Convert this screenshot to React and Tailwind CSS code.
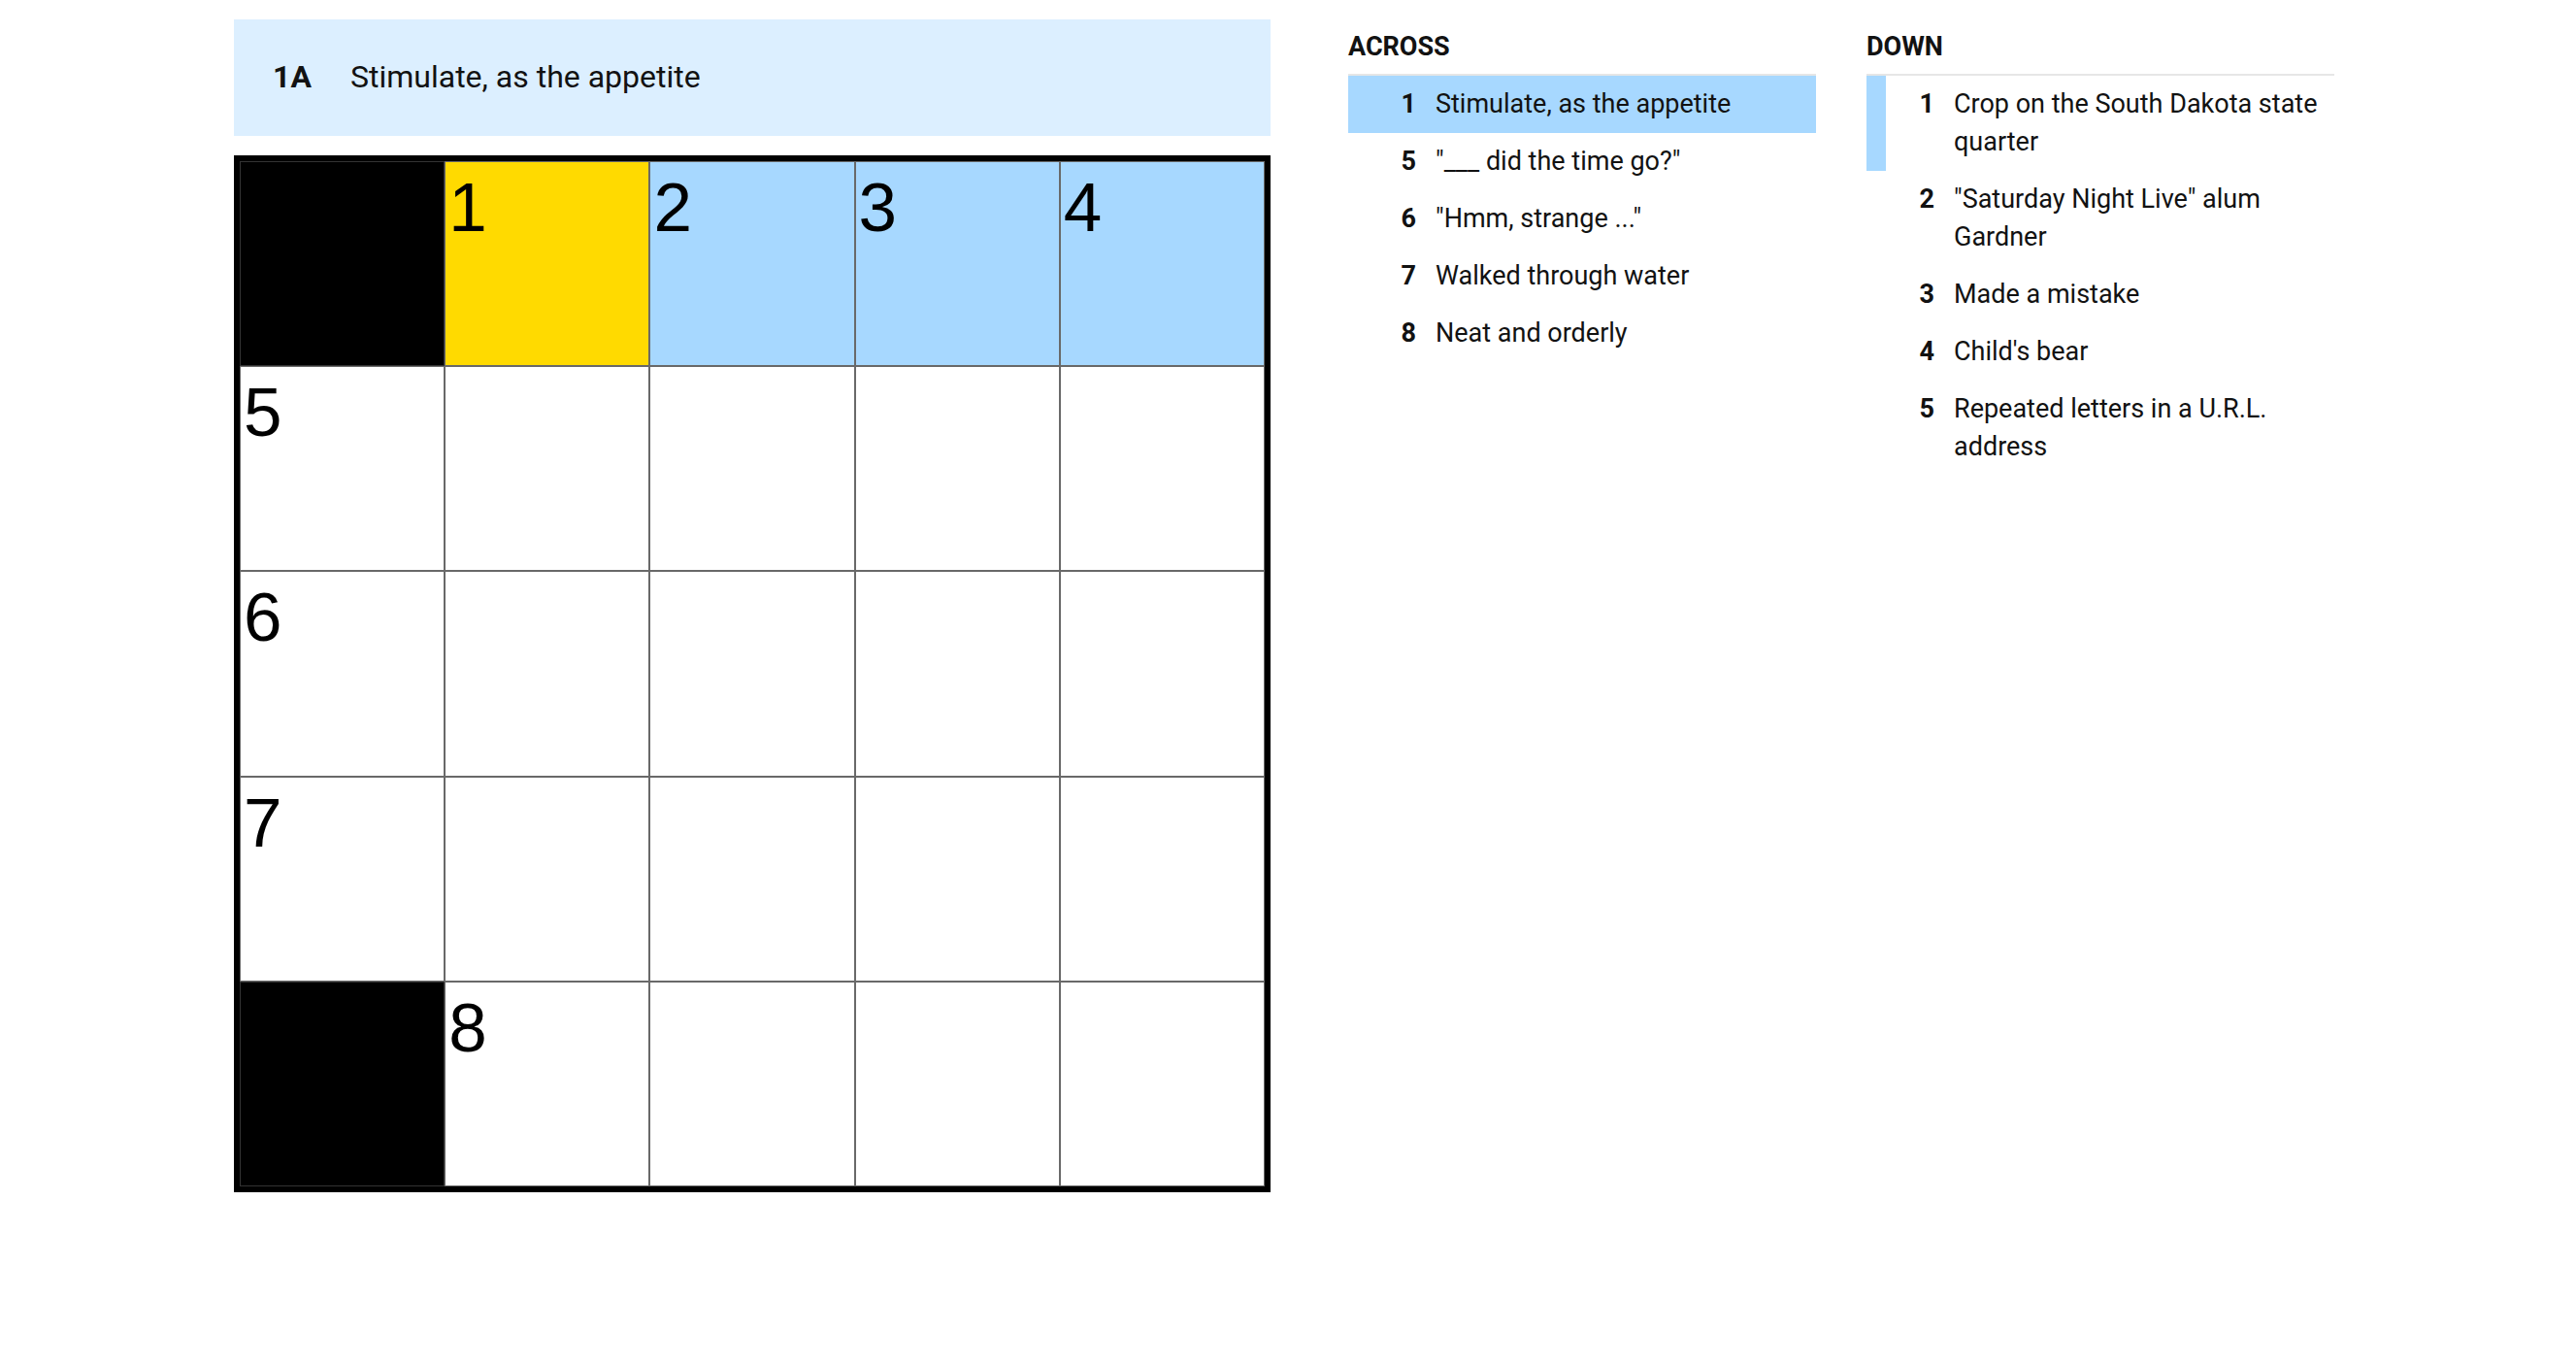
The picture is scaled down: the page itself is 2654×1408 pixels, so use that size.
import React, { useState } from "react";

const ACROSS = [
  { num: 1, text: "Stimulate, as the appetite" },
  { num: 5, text: '"___ did the time go?"' },
  { num: 6, text: '"Hmm, strange ..."' },
  { num: 7, text: "Walked through water" },
  { num: 8, text: "Neat and orderly" },
];

const DOWN = [
  { num: 1, text: "Crop on the South Dakota state quarter" },
  { num: 2, text: '"Saturday Night Live" alum Gardner' },
  { num: 3, text: "Made a mistake" },
  { num: 4, text: "Child's bear" },
  { num: 5, text: "Repeated letters in a U.R.L. address" },
];

// "#" is a block, "." an unnumbered square
const GRID = ["#1234", "5....", "6....", "7....", "#8..."];
const CELLS = GRID.join("").split("");

const rowClue = (row) => ACROSS[row];
const colClue = (col) => DOWN[col === 0 ? 4 : col - 1];

function cellColor(index, selected) {
  if (index === selected) return "bg-[#ffda00]";
  if (Math.floor(index / 5) === Math.floor(selected / 5)) return "bg-[#a7d8ff]";
  return "bg-white";
}

function Board({ selected, onSelect }) {
  return (
    <div className="grid aspect-square grid-cols-5 grid-rows-5 gap-0.5 border-[6px] border-black bg-[#696969] p-px">
      {CELLS.map((c, i) =>
        c === "#" ? (
          <div key={i} className="-m-px border border-[#333] bg-black" />
        ) : (
          <button
            key={i}
            onClick={() => onSelect(i)}
            aria-label={`Row ${Math.floor(i / 5) + 1}, column ${(i % 5) + 1}`}
            className={`flex items-start pl-[3px] pt-2 text-left font-['Liberation_Sans',sans-serif] text-[71px] leading-[78px] text-black ${cellColor(i, selected)}`}
          >
            {c === "." ? "" : c}
          </button>
        )
      )}
    </div>
  );
}

function ClueList({ title, clues, activeNum, crossNum }) {
  return (
    <section>
      <h2 className="border-b-2 border-[#e6e6e6] pb-2 text-[27px] leading-10 font-bold uppercase">
        {title}
      </h2>
      <ol>
        {clues.map(({ num, text }) => (
          <li
            key={num}
            className={`flex gap-5 border-l-[20px] py-2.5 pr-2 text-[27px] leading-[39px] ${
              num === activeNum
                ? "border-[#a7d8ff] bg-[#a7d8ff]"
                : num === crossNum
                ? "border-[#a7d8ff]"
                : "border-transparent"
            }`}
          >
            <span className="w-[50px] shrink-0 text-right font-bold">{num}</span>
            <span>{text}</span>
          </li>
        ))}
      </ol>
    </section>
  );
}

export default function App() {
  const [selected, setSelected] = useState(1);
  const across = rowClue(Math.floor(selected / 5));
  const down = colClue(selected % 5);

  return (
    <div className="min-h-screen bg-white pr-2 font-[Roboto,sans-serif] text-[#121212]">
      <main className="mx-auto grid max-w-[2164px] items-start gap-20 pt-5 lg:grid-cols-[1068fr_1016fr]">
        <div className="flex flex-col gap-5">
          <div className="flex min-h-[120px] items-center bg-[#dcefff] pb-0.5 text-[32px] leading-10">
            <span className="w-[120px] shrink-0 text-center font-bold">{across.num}A</span>
            <span>{across.text}</span>
          </div>
          <Board selected={selected} onSelect={setSelected} />
        </div>
        <div className="grid grid-cols-2 gap-[52px] pt-2">
          <ClueList title="Across" clues={ACROSS} activeNum={across.num} />
          <ClueList title="Down" clues={DOWN} crossNum={down.num} />
        </div>
      </main>
    </div>
  );
}
